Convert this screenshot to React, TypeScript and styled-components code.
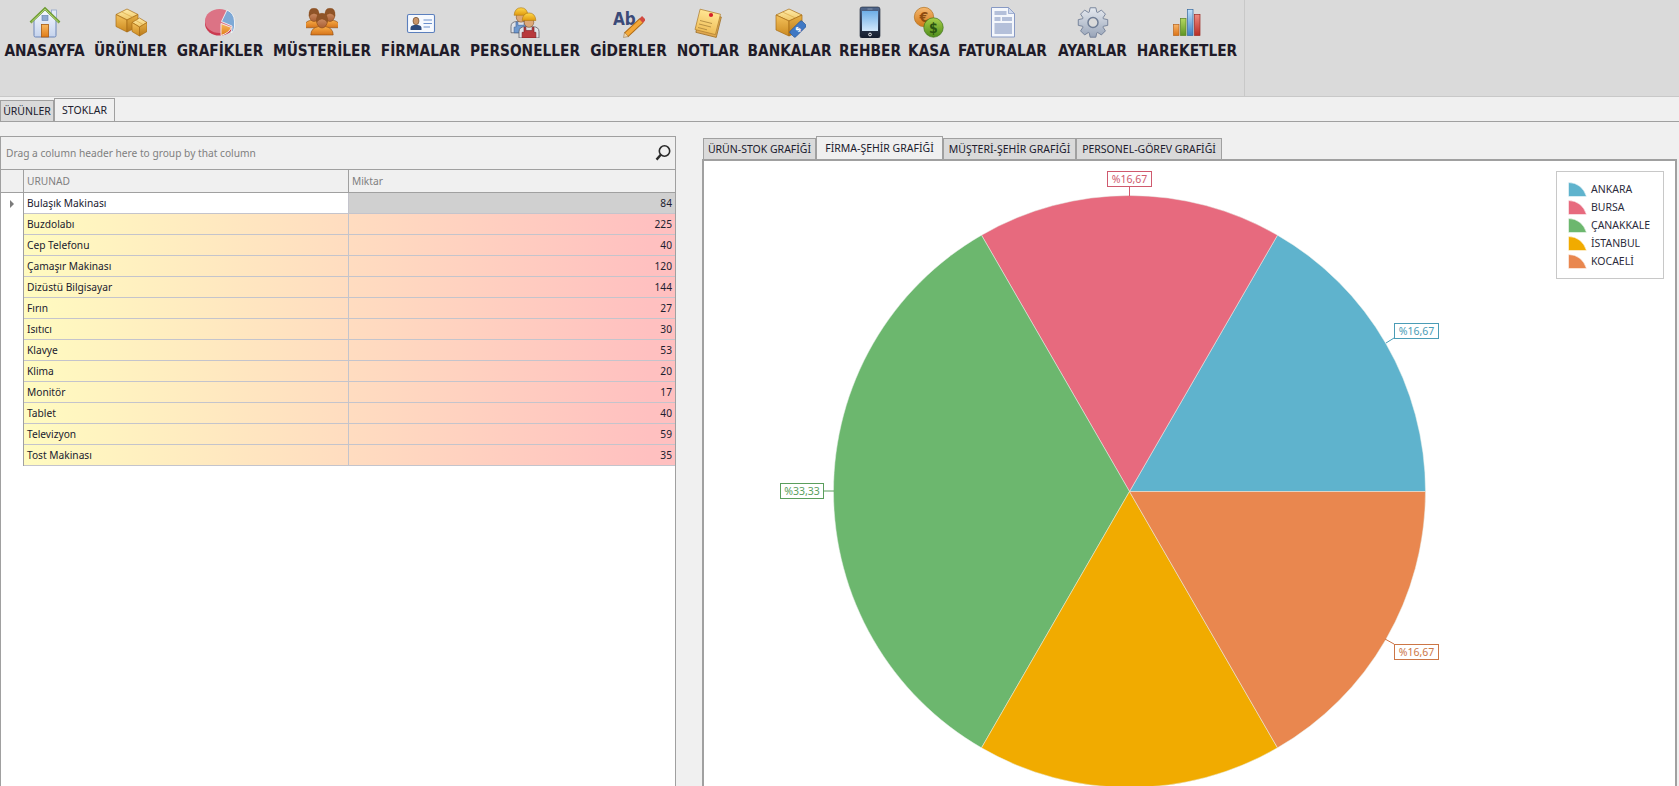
import React from "react";
import styled, { createGlobalStyle } from "styled-components";

const UI_FONT = `"Noto Sans", "DejaVu Sans", sans-serif`;
const LABEL_FONT = `"DejaVu Sans Condensed", "DejaVu Sans", sans-serif`;

const GlobalStyle = createGlobalStyle`
  html, body { margin: 0; padding: 0; height: 786px; overflow: hidden; background: #f0f0f0; }
  #root { height: 786px; overflow: hidden; }
  * { box-sizing: border-box; }
`;

const Page = styled.div`
  width: 1679px;
  height: 786px;
  overflow: hidden;
  background: #f0f0f0;
  font-family: ${UI_FONT};
  font-size: 10.2px;
  color: #20202e;
`;

const Ribbon = styled.header`
  height: 97px;
  background: #dadada;
  border-bottom: 1px solid #c8c8c8;
  display: flex;
`;

const RibbonGroup = styled.nav`
  width: 1245px;
  padding-right: 3px;
  border-right: 1px solid #c8c8c8;
  display: flex;
  align-items: flex-start;
`;

const RibbonItem = styled.div<{ $w: number }>`
  width: ${(p) => p.$w}px;
  flex: none;
  padding-top: 6px;
  display: flex;
  flex-direction: column;
  align-items: center;
`;

const RibbonLabel = styled.span`
  margin-top: 4px;
  font-family: ${LABEL_FONT};
  font-weight: 700;
  font-size: 15.3px;
  line-height: 18px;
  color: #1f1b29;
  white-space: nowrap;
`;

const DocTabs = styled.div`
  height: 25px;
  display: flex;
  align-items: flex-end;
  border-bottom: 1px solid #a0a0a0;
`;

const DocTab = styled.div<{ $active?: boolean; $w: number }>`
  width: ${(p) => p.$w}px;
  height: ${(p) => (p.$active ? 23 : 21)}px;
  border: 1px solid #a0a0a0;
  border-bottom: none;
  background: ${(p) => (p.$active ? "#f0f0f0" : "#dadada")};
  display: flex;
  align-items: center;
  justify-content: center;
  white-space: nowrap;
  font-size: 10.5px;
`;

const Content = styled.main`
  display: flex;
  padding-top: 14px;
`;

const GridPanel = styled.section`
  width: 676px;
  height: 660px;
  flex: none;
  background: #fff;
  border: 1px solid #a0a0a0;
`;

const GroupPanel = styled.div`
  height: 33px;
  background: #f0f0f0;
  border-bottom: 1px solid #a0a0a0;
  display: flex;
  align-items: center;
  justify-content: space-between;
  padding: 0 3px 0 5px;
  color: #7f7f7f;
`;

const HeaderRow = styled.div`
  height: 23px;
  background: #f0f0f0;
  border-bottom: 1px solid #a0a0a0;
  display: grid;
  grid-template-columns: 23px 325px 1fr;
  color: #7f7f7f;
`;

const HeaderCell = styled.div`
  padding: 0 0 1px 3px;
  display: flex;
  align-items: center;
  &:not(:last-child) { border-right: 1px solid #a0a0a0; }
`;

const Row = styled.div`
  height: 21px;
  display: grid;
  grid-template-columns: 23px 1fr;
`;

const Indicator = styled.div`
  border-right: 1px solid #a0a0a0;
  display: flex;
  align-items: center;
  padding-left: 9px;
`;

const Arrow = styled.span`
  width: 0;
  height: 0;
  border-left: 4px solid #7b7b7b;
  border-top: 4px solid transparent;
  border-bottom: 4px solid transparent;
`;

const RowCells = styled.div<{ $selected?: boolean }>`
  display: grid;
  grid-template-columns: 325px 1fr;
  background: ${(p) =>
    p.$selected ? "linear-gradient(to right, #fff 325px, #d0d0d0 325px)" : "linear-gradient(to right, #fffbc0, #ffc0c0 96%)"};
  border-bottom: 1px solid #c4c4cc;
`;

const NameCell = styled.div`
  padding: 0 0 1px 3px;
  display: flex;
  align-items: center;
  border-right: 1px solid #c4c4cc;
  white-space: nowrap;
`;

const ValueCell = styled.div`
  padding: 0 3px 1px 0;
  display: flex;
  align-items: center;
  justify-content: flex-end;
`;

const ChartColumn = styled.section`
  margin-left: 26px;
  width: 975px;
  flex: none;
`;

const ChartTabs = styled.div`
  height: 23px;
  display: flex;
  align-items: flex-end;
  padding-left: 1px;
`;

const ChartTab = styled.div<{ $active?: boolean; $w: number }>`
  width: ${(p) => p.$w}px;
  height: ${(p) => (p.$active ? 23 : 21)}px;
  flex: none;
  padding-bottom: 1px;
  border: 1px solid #a0a0a0;
  border-bottom: none;
  background: ${(p) => (p.$active ? "#f0f0f0" : "#dadada")};
  display: flex;
  align-items: center;
  justify-content: center;
  white-space: nowrap;
  font-size: 10.5px;
`;

const ChartFrame = styled.div`
  position: relative;
  height: 660px;
  background: #fff;
  border: 2px solid #a0a0a0;
`;

const ChartSvg = styled.svg`
  display: block;
`;

const Legend = styled.aside`
  position: absolute;
  top: 10px;
  right: 11px;
  width: 108px;
  height: 108px;
  background: #fff;
  border: 1px solid #c8c8c8;
  padding: 10px 0 0 11px;
  display: flex;
  flex-direction: column;
`;

const LegendRow = styled.div`
  height: 18px;
  display: flex;
  align-items: flex-start;
  gap: 4px;
  color: #2c2c3c;
  font-size: 10.5px;
  line-height: 15px;
  white-space: nowrap;
`;

const SvgDefs = styled.svg`
  position: absolute;
  width: 0;
  height: 0;
`;

const Defs = () => {
  const g = (id: string, a: string, b: string) => (
    <linearGradient id={id} x1="0" y1="0" x2="0" y2="1">
      <stop offset="0" stopColor={a} />
      <stop offset="1" stopColor={b} />
    </linearGradient>
  );
  return (
    <SvgDefs aria-hidden="true">
      <defs>
        {g("gPale", "#f8faff", "#c5d3ec")}
        {g("gOrange", "#f8b860", "#e07c18")}
        {g("gTop", "#ffecaa", "#efc664")}
        {g("gLeft", "#f4c25c", "#cc8a20")}
        {g("gRight", "#e8b246", "#b8781a")}
        {g("gBody", "#f8ac48", "#d6741a")}
        {g("gHead", "#dca27a", "#a85e34")}
        {g("gHat", "#ffd84a", "#e09a10")}
        {g("gPhone", "#52688c", "#141c2c")}
        {g("gScreen", "#6eaee6", "#d2e8fb")}
        {g("gEuro", "#f6b870", "#d07818")}
        {g("gGreen", "#a8d048", "#4e8c1c")}
        {g("gGear", "#e6eaf0", "#98a4b8")}
        {g("gNote", "#ffe592", "#efbd58")}
        {g("gBlue", "#bfe0fa", "#3f83c6")}
        {g("gBarO", "#f8b468", "#dc7418")}
        {g("gBarG", "#b4d860", "#5e9424")}
        {g("gBarR", "#ee8a80", "#b82c24")}
      </defs>
    </SvgDefs>
  );
};

const Icon = ({ children }: { children: React.ReactNode }) => (
  <svg width="32" height="32" viewBox="0 0 32 32" aria-hidden="true">
    {children}
  </svg>
);

const Cube = ({ cx, top, hw, rh, h }: { cx: number; top: number; hw: number; rh: number; h: number }) => (
  <g stroke="#a86c14" strokeWidth="0.7" strokeLinejoin="round">
    <path d={`M${cx} ${top}L${cx + hw} ${top + rh}L${cx} ${top + 2 * rh}L${cx - hw} ${top + rh}Z`} fill="url(#gTop)" />
    <path d={`M${cx - hw} ${top + rh}L${cx} ${top + 2 * rh}V${top + 2 * rh + h}L${cx - hw} ${top + rh + h}Z`} fill="url(#gLeft)" />
    <path d={`M${cx + hw} ${top + rh}L${cx} ${top + 2 * rh}V${top + 2 * rh + h}L${cx + hw} ${top + rh + h}Z`} fill="url(#gRight)" />
    <path d={`M${cx - hw / 2} ${top + rh / 2}L${cx + hw / 2} ${top + 1.5 * rh}`} stroke="#d8a848" fill="none" />
  </g>
);

const Person = ({ cx, y, s }: { cx: number; y: number; s: number }) => (
  <g stroke="#8a4a14" strokeWidth="0.6">
    <path
      d={`M${cx - 8 * s} ${y + 15 * s}Q${cx - 8 * s} ${y + 10 * s} ${cx - 2.5 * s} ${y + 9 * s}H${cx + 2.5 * s}Q${cx + 8 * s} ${y + 10 * s} ${cx + 8 * s} ${y + 15 * s}Z`}
      fill="url(#gBody)"
    />
    <ellipse cx={cx} cy={y + 5 * s} rx={3.8 * s} ry={5 * s} fill="url(#gHead)" />
    <path d={`M${cx - 4 * s} ${y + 6 * s}Q${cx - 4.5 * s} ${y - 1 * s} ${cx} ${y - 0.5 * s}Q${cx + 4.5 * s} ${y - 1 * s} ${cx + 4 * s} ${y + 6 * s}Q${cx} ${y + 1 * s} ${cx - 4 * s} ${y + 6 * s}Z`} fill="#8f5428" strokeWidth="0.3" />
  </g>
);

const Worker = ({ cx, y, s, color, bib }: { cx: number; y: number; s: number; color: string; bib: string }) => (
  <g transform={`translate(${cx} ${y}) scale(${s})`}>
    <path d="M-8 19V14Q-8 10 -3 10H3Q8 10 8 14V19Z" fill="#dfe2e8" stroke="#5a5a62" strokeWidth="0.6" />
    <path d="M-5.5 19V14.5H-4V10.5H-2.5V13H2.5V10.5H4V14.5H5.5V19Z" fill={color} stroke={bib} strokeWidth="0.5" />
    <ellipse cx="0" cy="6.5" rx="3.8" ry="4" fill="#dca878" stroke="#8a5a34" strokeWidth="0.5" />
    <path d="M-5.5 5Q-5 -1 0 -1Q5 -1 5.5 5Z" fill="url(#gHat)" stroke="#b07a10" strokeWidth="0.5" />
  </g>
);

const gearPath = (() => {
  const cx = 16;
  const cy = 16.5;
  const pts: string[] = [];
  const n = 8;
  for (let i = 0; i < n; i++) {
    const a = (i / n) * Math.PI * 2;
    const step = (Math.PI * 2) / n;
    [
      [11, -0.5],
      [15, -0.27],
      [15, 0.27],
      [11, 0.5],
    ].forEach(([r, f]) => {
      const t = a + f * step * 0.9;
      pts.push(`${(cx + r * Math.sin(t)).toFixed(2)} ${(cy - r * Math.cos(t)).toFixed(2)}`);
    });
  }
  return `M${pts.join("L")}Z`;
})();

const icons: Record<string, React.ReactNode> = {
  home: (
    <>
      <rect x="22.5" y="4" width="5" height="9" fill="#e2e9f6" stroke="#8fa4c8" strokeWidth="0.8" />
      <path d="M5 14V29.5Q5 31 6.5 31H25.5Q27 31 27 29.5V14L16 3.5Z" fill="url(#gPale)" stroke="#6d86b8" />
      <rect x="13" y="9.5" width="6" height="5" fill="#8fa9cf" stroke="#5f7fb0" strokeWidth="0.6" />
      <rect x="12.5" y="18.5" width="7" height="12.5" fill="url(#gOrange)" stroke="#a85a10" strokeWidth="0.8" />
      <path d="M1.5 16.5L16 2.5L30.5 16.5" fill="none" stroke="#6f9c34" strokeWidth="2.6" />
      <path d="M2.5 16L16 3.2L29.5 16" fill="none" stroke="#bfe080" strokeWidth="0.9" />
    </>
  ),
  boxes: (
    <>
      <Cube cx={12} top={3} hw={11} rh={5.5} h={12} />
      <Cube cx={24.5} top={12} hw={7.5} rh={4.5} h={9} />
    </>
  ),
  pie: (
    <>
      <ellipse cx="15.5" cy="18" rx="14.5" ry="11.5" fill="#cb3a50" />
      <ellipse cx="15.5" cy="15" rx="14.5" ry="12" fill="#dc7385" />
      <path d="M17.5 15.5L23 4Q30 7 30.5 15V21Q30 25 27.5 27L28 20Z" fill="#7ea9d6" stroke="#f4f4f4" strokeWidth="0.9" />
      <path d="M17 17.5L27.5 21.5Q25 27 17 29.5Z" fill="url(#gOrange)" stroke="#f4f4f4" strokeWidth="0.9" />
    </>
  ),
  people: (
    <>
      <Person cx={8} y={3} s={1.25} />
      <Person cx={24} y={3} s={1.25} />
      <Person cx={16} y={8} s={1.4} />
    </>
  ),
  card: (
    <>
      <rect x="2.5" y="8.5" width="27" height="18" rx="1.5" fill="#f6f9fe" stroke="#5b7fbd" strokeWidth="1.1" />
      <path d="M5.5 24V22Q5.5 19.5 9 19H13Q16.5 19.5 16.5 22V24Z" fill="#2c4a7c" />
      <ellipse cx="11" cy="15" rx="3" ry="3.7" fill="#c89468" stroke="#5a3a20" strokeWidth="0.6" />
      <path d="M18.5 14H27M18.5 17.5H27M18.5 21H25" stroke="#6a90cc" strokeWidth="1" />
    </>
  ),
  workers: (
    <>
      <Worker cx={12} y={3} s={1.25} color="#6f9ad0" bib="#3a5f96" />
      <Worker cx={20} y={8.2} s={1.25} color="#b8383c" bib="#7c1c20" />
    </>
  ),
  ab: (
    <>
      <text x="0" y="19" fontFamily={LABEL_FONT} fontWeight="700" fontSize="17" fill="#3b4a78">Ab</text>
      <path d="M13 29L28.5 14.5" stroke="#b06a14" strokeWidth="6" />
      <path d="M13 29L28.5 14.5" stroke="#f3a838" strokeWidth="4" />
      <path d="M28 15L31 12" stroke="#d24a40" strokeWidth="5.4" />
      <path d="M10.5 31.5L11.5 26.5L15.5 30.5Z" fill="#f0d4a8" stroke="#8a6a3c" strokeWidth="0.5" />
    </>
  ),
  notes: (
    <g transform="translate(0 1)">
      <rect x="6.5" y="7" width="21" height="21" fill="#e0a850" stroke="#9a6a20" strokeWidth="0.7" transform="rotate(14 16 16)" />
      <rect x="5" y="4.5" width="21" height="21" fill="url(#gNote)" stroke="#b08030" strokeWidth="0.7" transform="rotate(14 16 16)" />
      <path d="M8 13.5L20 16.5M7 17L19 20M6 20.5L15 22.8" stroke="#b08a40" strokeWidth="0.9" />
      <circle cx="19" cy="8" r="2.1" fill="#d4202a" />
    </g>
  ),
  bank: (
    <>
      <Cube cx={15} top={3} hw={13} rh={6} h={15} />
      <g transform="rotate(-45 24 23)">
        <rect x="15.5" y="19" width="17" height="8" rx="1.5" fill="#3f78c4" stroke="#23508e" strokeWidth="0.6" />
        <text x="24" y="25.8" textAnchor="middle" fontSize="7.5" fontWeight="700" fontFamily={LABEL_FONT} fill="#fff">$</text>
      </g>
    </>
  ),
  phone: (
    <>
      <rect x="6" y="1" width="20" height="31" rx="2.2" fill="url(#gPhone)" stroke="#1a2234" strokeWidth="0.6" />
      <rect x="8" y="5" width="16" height="20" fill="url(#gScreen)" />
      <rect x="13.5" y="2.6" width="5" height="0.9" fill="#8a98b0" />
      <circle cx="16" cy="28.5" r="1.4" fill="none" stroke="#fff" strokeWidth="0.9" />
    </>
  ),
  coins: (
    <>
      <circle cx="11" cy="11" r="9.7" fill="url(#gEuro)" stroke="#b0701c" strokeWidth="0.7" />
      <text x="11" y="16" textAnchor="middle" fontSize="14" fontWeight="700" fontFamily={LABEL_FONT} fill="#8f4c10">€</text>
      <circle cx="20.5" cy="21.5" r="9.7" fill="url(#gGreen)" stroke="#3f7418" strokeWidth="0.7" />
      <text x="20.5" y="26.6" textAnchor="middle" fontSize="14" fontWeight="700" fontFamily={LABEL_FONT} fill="#2a5410">$</text>
    </>
  ),
  doc: (
    <>
      <path d="M4.5 1.5H21.5L27.5 7.5V31H4.5Z" fill="#f4f7fc" stroke="#8799c4" />
      <path d="M21.5 1.5V7.5H27.5Z" fill="#cfd9ec" stroke="#8799c4" strokeWidth="0.7" />
      <rect x="7.5" y="5" width="12" height="4" fill="#b4c0da" />
      <rect x="7.5" y="11" width="6" height="4" fill="#b4c0da" />
      <rect x="15" y="11" width="10" height="4" fill="#b4c0da" />
      <rect x="7.5" y="17" width="17.5" height="11" fill="#b4c0da" />
    </>
  ),
  gear: (
    <>
      <path d={gearPath} fill="url(#gGear)" stroke="#6f7d95" strokeWidth="0.9" strokeLinejoin="round" />
      <circle cx="16" cy="16.5" r="5" fill="#dadada" stroke="#6f7d95" strokeWidth="1.5" />
    </>
  ),
  bars: (
    <>
      <rect x="2.5" y="18.5" width="5.5" height="11" fill="url(#gBarO)" stroke="#b8641c" strokeWidth="0.7" />
      <rect x="9.5" y="12.5" width="5.5" height="17" fill="url(#gBarG)" stroke="#5a8420" strokeWidth="0.7" />
      <rect x="16.5" y="3.5" width="5.5" height="26" fill="url(#gBlue)" stroke="#34689e" strokeWidth="0.7" />
      <rect x="23.5" y="8.5" width="5.5" height="21" fill="url(#gBarR)" stroke="#9a2a24" strokeWidth="0.7" />
    </>
  ),
};

const ribbon = [
  { label: "ANASAYFA", w: 89, icon: "home" },
  { label: "ÜRÜNLER", w: 83, icon: "boxes" },
  { label: "GRAFİKLER", w: 96, icon: "pie" },
  { label: "MÜSTERİLER", w: 108, icon: "people" },
  { label: "FİRMALAR", w: 89, icon: "card" },
  { label: "PERSONELLER", w: 120, icon: "workers" },
  { label: "GİDERLER", w: 87, icon: "ab" },
  { label: "NOTLAR", w: 72, icon: "notes" },
  { label: "BANKALAR", w: 91, icon: "bank" },
  { label: "REHBER", w: 70, icon: "phone" },
  { label: "KASA", w: 48, icon: "coins" },
  { label: "FATURALAR", w: 99, icon: "doc" },
  { label: "AYARLAR", w: 81, icon: "gear" },
  { label: "HAREKETLER", w: 108, icon: "bars" },
];

const stock: [string, number][] = [
  ["Bulaşık Makinası", 84],
  ["Buzdolabı", 225],
  ["Cep Telefonu", 40],
  ["Çamaşır Makinası", 120],
  ["Dizüstü Bilgisayar", 144],
  ["Fırın", 27],
  ["Isıtıcı", 30],
  ["Klavye", 53],
  ["Klima", 20],
  ["Monitör", 17],
  ["Tablet", 40],
  ["Televizyon", 59],
  ["Tost Makinası", 35],
];

const chartTabs = [
  { label: "ÜRÜN-STOK GRAFİĞİ", w: 113 },
  { label: "FİRMA-ŞEHİR GRAFİĞİ", w: 127, active: true },
  { label: "MÜŞTERİ-ŞEHİR GRAFİĞİ", w: 133 },
  { label: "PERSONEL-GÖREV GRAFİĞİ", w: 146 },
];

const CX = 1129.5;
const CY = 491.5;
const R = 296;
const point = (deg: number) => {
  const a = (deg * Math.PI) / 180;
  return [CX + R * Math.cos(a), CY - R * Math.sin(a)];
};
const slices = [
  { name: "ANKARA", from: 0, to: 60, color: "#5fb3cd" },
  { name: "BURSA", from: 60, to: 120, color: "#e76a7e" },
  { name: "ÇANAKKALE", from: 120, to: 240, color: "#6cb76e" },
  { name: "İSTANBUL", from: 240, to: 300, color: "#f1ab00" },
  { name: "KOCAELİ", from: 300, to: 360, color: "#e9874f" },
];
const slicePath = (from: number, to: number) => {
  const [x1, y1] = point(from);
  const [x2, y2] = point(to);
  return `M${CX} ${CY}L${x1} ${y1}A${R} ${R} 0 0 0 ${x2} ${y2}Z`;
};

const labels = [
  { text: "%16,67", x: 1394, y: 323, w: 44, color: "#4a9cb6", line: "M1386 343L1394 338" },
  { text: "%16,67", x: 1107, y: 171, w: 44, color: "#cf5a6e", line: "M1129.5 186V196" },
  { text: "%33,33", x: 780, y: 483, w: 43, color: "#5a9e5c", line: "M823 491H834" },
  { text: "%16,67", x: 1394, y: 644, w: 44, color: "#cc7646", line: "M1385 639L1394 644" },
];

export default function App() {
  return (
    <Page>
      <GlobalStyle />
      <Defs />
      <Ribbon>
        <RibbonGroup>
          {ribbon.map((r) => (
            <RibbonItem key={r.label} $w={r.w}>
              <Icon>{icons[r.icon]}</Icon>
              <RibbonLabel>{r.label}</RibbonLabel>
            </RibbonItem>
          ))}
        </RibbonGroup>
      </Ribbon>
      <DocTabs>
        <DocTab $w={54}>ÜRÜNLER</DocTab>
        <DocTab $w={61} $active>STOKLAR</DocTab>
      </DocTabs>
      <Content>
        <GridPanel>
          <GroupPanel>
            <span>Drag a column header here to group by that column</span>
            <svg width="18" height="18" viewBox="0 0 18 18" aria-hidden="true">
              <circle cx="10.5" cy="7" r="5.2" fill="none" stroke="#2a2a2a" strokeWidth="1.6" />
              <path d="M6.8 10.8L2.5 15.6" stroke="#2a2a2a" strokeWidth="2.4" />
            </svg>
          </GroupPanel>
          <HeaderRow>
            <HeaderCell />
            <HeaderCell>URUNAD</HeaderCell>
            <HeaderCell>Miktar</HeaderCell>
          </HeaderRow>
          {stock.map(([name, qty], i) => (
            <Row key={name}>
              <Indicator>{i === 0 && <Arrow />}</Indicator>
              <RowCells $selected={i === 0}>
                <NameCell>{name}</NameCell>
                <ValueCell>{qty}</ValueCell>
              </RowCells>
            </Row>
          ))}
        </GridPanel>
        <ChartColumn>
          <ChartTabs>
            {chartTabs.map((t) => (
              <ChartTab key={t.label} $w={t.w} $active={t.active}>{t.label}</ChartTab>
            ))}
          </ChartTabs>
          <ChartFrame>
            <ChartSvg width="971" height="656" viewBox="704 161 971 656">
              {slices.map((s) => (
                <path key={s.name} d={slicePath(s.from, s.to)} fill={s.color} stroke="#e8f0ea" strokeWidth="0.5" />
              ))}
              {labels.map((l) => (
                <g key={l.line}>
                  <path d={l.line} stroke={l.color} strokeWidth="1" fill="none" />
                  <rect x={l.x + 0.5} y={l.y + 0.5} width={l.w} height="15" fill="#fff" stroke={l.color} />
                  <text x={l.x + l.w / 2 + 0.5} y={l.y + 12} textAnchor="middle" fontSize="10.5" fontFamily={UI_FONT} fill={l.color}>
                    {l.text}
                  </text>
                </g>
              ))}
            </ChartSvg>
            <Legend>
              {slices.map((s) => (
                <LegendRow key={s.name}>
                  <svg width="19" height="15" viewBox="0 0 19 15" aria-hidden="true">
                    <path d="M0.5 0.5Q14 1 18.5 14.5H0.5Z" fill={s.color} stroke="#ffffff" strokeOpacity="0.5" />
                  </svg>
                  {s.name}
                </LegendRow>
              ))}
            </Legend>
          </ChartFrame>
        </ChartColumn>
      </Content>
    </Page>
  );
}
